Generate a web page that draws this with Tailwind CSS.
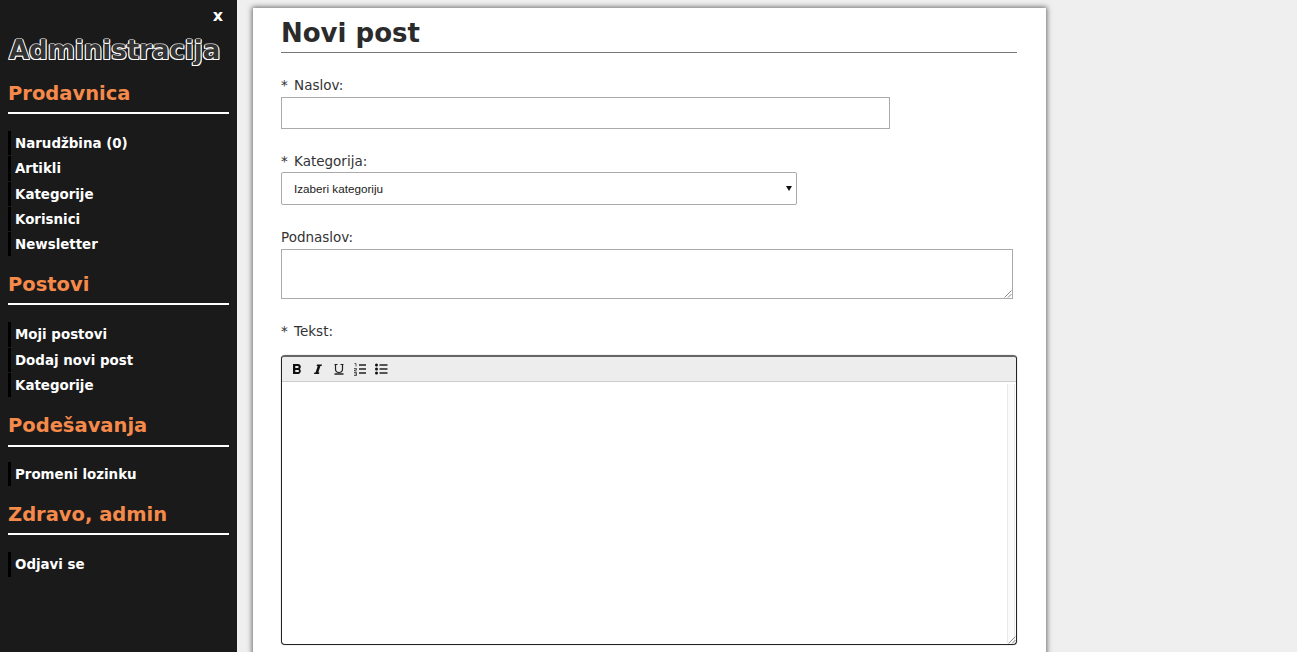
<!DOCTYPE html>
<html>
<head>
<meta charset="utf-8">
<script src="https://cdn.jsdelivr.net/npm/@tailwindcss/browser@4"></script>
</head>
<body class="bg-[#efefef] font-['DejaVu_Sans',sans-serif]">
<div class="flex h-[652px] w-[1297px] overflow-hidden">
  <aside class="w-[237px] h-full shrink-0 bg-[#1a1a1a] pl-[8px] pr-[8px] text-white">
    <div class="h-[33px] pt-[7px] pr-[6px] text-right text-[16px] leading-[18px] font-bold">x</div>
    <div class="h-[38px] pl-[1px] text-[26px] leading-[34px] font-bold text-[#333] whitespace-nowrap [text-shadow:-1px_1px_0_#fff,1px_1px_0_#fff,1px_0_0_#eee,-1px_0_0_#eee,0_-1px_0_#999]">Administracija</div>
    <h2 class="mt-[8px] text-[19.5px] leading-[30px] font-bold text-[#f58a4b]">Prodavnica</h2>
    <div class="mt-[3px] mb-[17px] h-[2px] w-[221px] bg-white"></div>
    <ul class="text-[13.4px] font-bold">
      <li class="mb-[1px] h-[24.25px] border-l-[3px] border-black pl-[4px] leading-[26px]">Narudžbina (0)</li>
      <li class="mb-[1px] h-[24.25px] border-l-[3px] border-black pl-[4px] leading-[26px]">Artikli</li>
      <li class="mb-[1px] h-[24.25px] border-l-[3px] border-black pl-[4px] leading-[26px]">Kategorije</li>
      <li class="mb-[1px] h-[24.25px] border-l-[3px] border-black pl-[4px] leading-[26px]">Korisnici</li>
      <li class="h-[24.25px] border-l-[3px] border-black pl-[4px] leading-[26px]">Newsletter</li>
    </ul>
    <h2 class="mt-[14px] text-[19.5px] leading-[30px] font-bold text-[#f58a4b]">Postovi</h2>
    <div class="mt-[3px] mb-[17px] h-[2px] w-[221px] bg-white"></div>
    <ul class="text-[13.4px] font-bold">
      <li class="mb-[1px] h-[24.25px] border-l-[3px] border-black pl-[4px] leading-[26px]">Moji postovi</li>
      <li class="mb-[1px] h-[24.25px] border-l-[3px] border-black pl-[4px] leading-[25px]">Dodaj novi post</li>
      <li class="h-[24.25px] border-l-[3px] border-black pl-[4px] leading-[26px]">Kategorije</li>
    </ul>
    <h2 class="mt-[14px] text-[19.5px] leading-[30px] font-bold text-[#f58a4b]">Podešavanja</h2>
    <div class="mt-[4px] mb-[15px] h-[2px] w-[221px] bg-white"></div>
    <ul class="text-[13.4px] font-bold">
      <li class="h-[24.25px] border-l-[3px] border-black pl-[4px] leading-[26px]">Promeni lozinku</li>
    </ul>
    <h2 class="mt-[14px] text-[19.5px] leading-[30px] font-bold text-[#f58a4b]">Zdravo, admin</h2>
    <div class="mt-[3px] mb-[17px] h-[2px] w-[221px] bg-white"></div>
    <ul class="text-[13.4px] font-bold">
      <li class="h-[24.25px] border-l-[3px] border-black pl-[4px] leading-[26px]">Odjavi se</li>
    </ul>
  </aside>
  <main class="ml-[16px] mt-[8px] h-[700px] w-[793px] shrink-0 bg-white pl-[28px] pr-[29px] text-[#333] shadow-[0_0_5px_1px_rgba(0,0,0,0.55)]">
    <h1 class="h-[45px] border-b border-[#777] pt-[6px] text-[26px] leading-[38px] font-bold text-[#2b2b2b]">Novi post</h1>
    <label class="mt-[22px] block text-[13.5px] leading-[20px] [word-spacing:2px]">* Naslov:</label>
    <input type="text" class="mt-[2px] block h-[32px] w-[609px] border border-[#aaa] bg-white">
    <label class="mt-[22px] block text-[13.5px] leading-[20px] [word-spacing:2px]">* Kategorija:</label>
    <div class="relative mt-[1px] flex h-[33px] w-[516px] items-center rounded-[2px] border border-[#aaa] pl-[12px] font-['Liberation_Sans',sans-serif] text-[11.7px] text-[#222]">
      Izaberi kategoriju
      <svg class="absolute right-[4px] top-[13px]" width="6" height="5" viewBox="0 0 6 5"><path d="M0 0h6L3 5z" fill="#111"/></svg>
    </div>
    <label class="mt-[22px] block text-[13.5px] leading-[20px]">Podnaslov:</label>
    <div class="relative mt-[2px] h-[50px] w-[732px] border border-[#aaa]">
      <svg class="absolute right-0 bottom-0" width="8" height="8" viewBox="0 0 8 8"><path d="M7.500 0.500L0.500 7.500M7.500 4L4 7.500" stroke="#888" stroke-width="1" fill="none"/></svg>
    </div>
    <label class="mt-[22px] block text-[13.5px] leading-[20px] [word-spacing:2px]">* Tekst:</label>
    <div class="relative mt-[14px] h-[290px] w-[736px] rounded-[4px] border border-[#222] border-t-2 border-t-[#666] shadow-[0_0_1px_rgba(0,0,0,0.5)]">
      <div class="flex h-[25px] items-center gap-[7px] border-b border-[#ccc] bg-[#ededed] pl-[8px] rounded-t-[3px]">
        <svg width="14" height="14" viewBox="0 0 14 14"><path d="M3 2h5a2.800 2.800 0 0 1 1.900 4.900A3 3 0 0 1 8.500 12H3zM5.300 4v2.100h2.300a1.050 1.050 0 0 0 0-2.100zM5.300 7.900V10h2.700a1.050 1.050 0 0 0 0-2.100z" fill="#111" fill-rule="evenodd"/></svg>
        <svg width="14" height="14" viewBox="0 0 14 14"><path d="M6 2.500h5L10.600 4H9.400L7.300 10.500h1.100L8 12H3l.4-1.500h1.200L6.700 4H5.600z" fill="#111"/></svg>
        <svg width="14" height="14" viewBox="0 0 14 14"><path d="M3.500 2.500v4.500a3.500 3.500 0 0 0 7 0V2.500M2.500 2.500h3M8.500 2.500h3" stroke="#222" stroke-width="1.200" fill="none"/><path d="M2.500 12h9" stroke="#222" stroke-width="1.500"/></svg>
        <svg width="14" height="14" viewBox="0 0 14 14"><path d="M6 3h7M6 7h7M6 11h7" stroke="#222" stroke-width="1.400"/><path d="M1.500 1.500h1.500v3M1 6.500h2.500v1.500H1.500v1H3.500M1 10.500h2.500v3H1M1.500 12h2" stroke="#333" stroke-width="0.800" fill="none"/></svg>
        <svg width="14" height="14" viewBox="0 0 14 14"><path d="M5.500 3h8M5.500 7h8M5.500 11h8" stroke="#222" stroke-width="1.400"/><circle cx="2.500" cy="3" r="1.500" fill="#111"/><circle cx="2.500" cy="7" r="1.500" fill="#111"/><circle cx="2.500" cy="11" r="1.500" fill="#111"/></svg>
      </div>
      <div class="absolute right-[1px] bottom-[1px] top-[27px] w-[8px] border-x border-[#e8e8e8] bg-[#fbfbfb]"></div>
      <svg class="absolute right-0 bottom-0" width="8" height="8" viewBox="0 0 8 8"><path d="M7.500 0.500L0.500 7.500M7.500 4L4 7.500" stroke="#888" stroke-width="1" fill="none"/></svg>
    </div>
  </main>
</div>
</body>
</html>
